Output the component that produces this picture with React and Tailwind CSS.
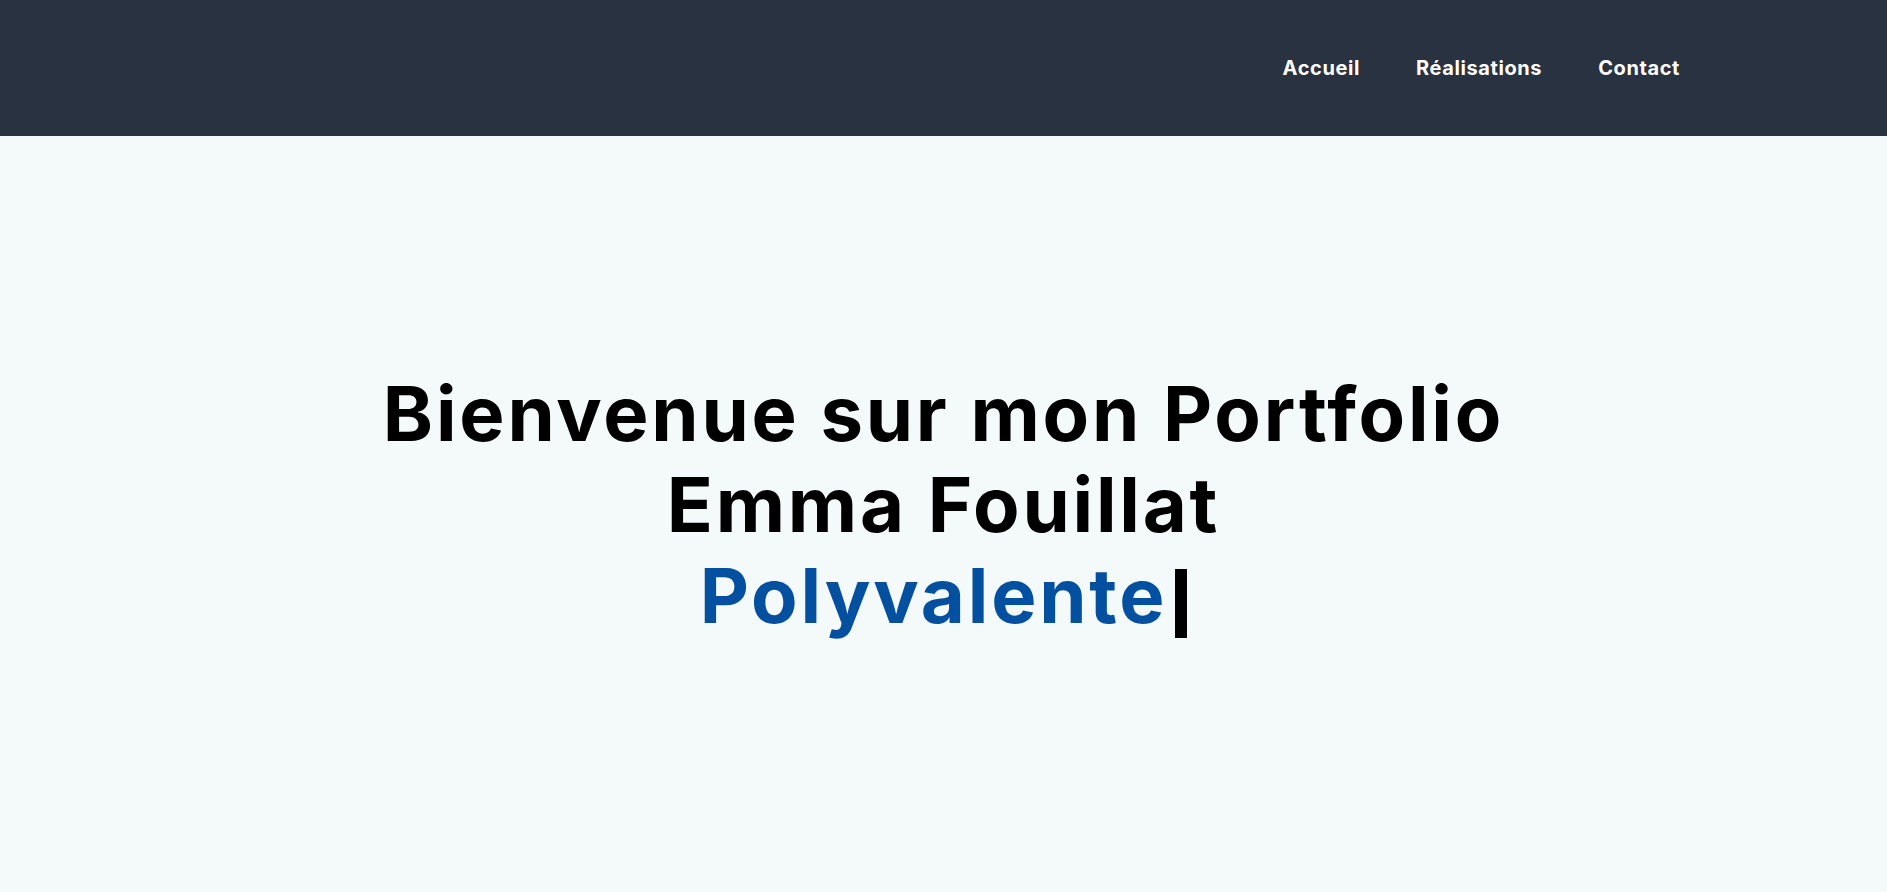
const links = ['Accueil', 'Réalisations', 'Contact']

export default function App() {
  return (
    <div className="min-h-screen bg-[#f4f9f9] font-['Inter',sans-serif]">
      {/* Header */}
      <header className="h-[136px] bg-[#293241] flex items-center justify-end pr-[207px]">
        <nav className="flex items-center gap-[56px]">
          {links.map(l => (
            <a key={l} href="#" className="text-white text-[20px] font-bold tracking-[0.6px]">{l}</a>
          ))}
        </nav>
      </header>

      {/* Hero */}
      <main className="h-[756px] flex items-center justify-center pb-5">
        <h1 className="text-center text-black text-[76px] leading-[91px] font-bold tracking-[2.8px]">
          Bienvenue sur mon Portfolio<br />
          Emma Fouillat<br />
          <span className="text-[#02509f]">Polyvalente</span>
          <span className="inline-block w-[12px] h-[69px] bg-black ml-[8px] align-[-15px]" />
        </h1>
      </main>
    </div>
  )
}
